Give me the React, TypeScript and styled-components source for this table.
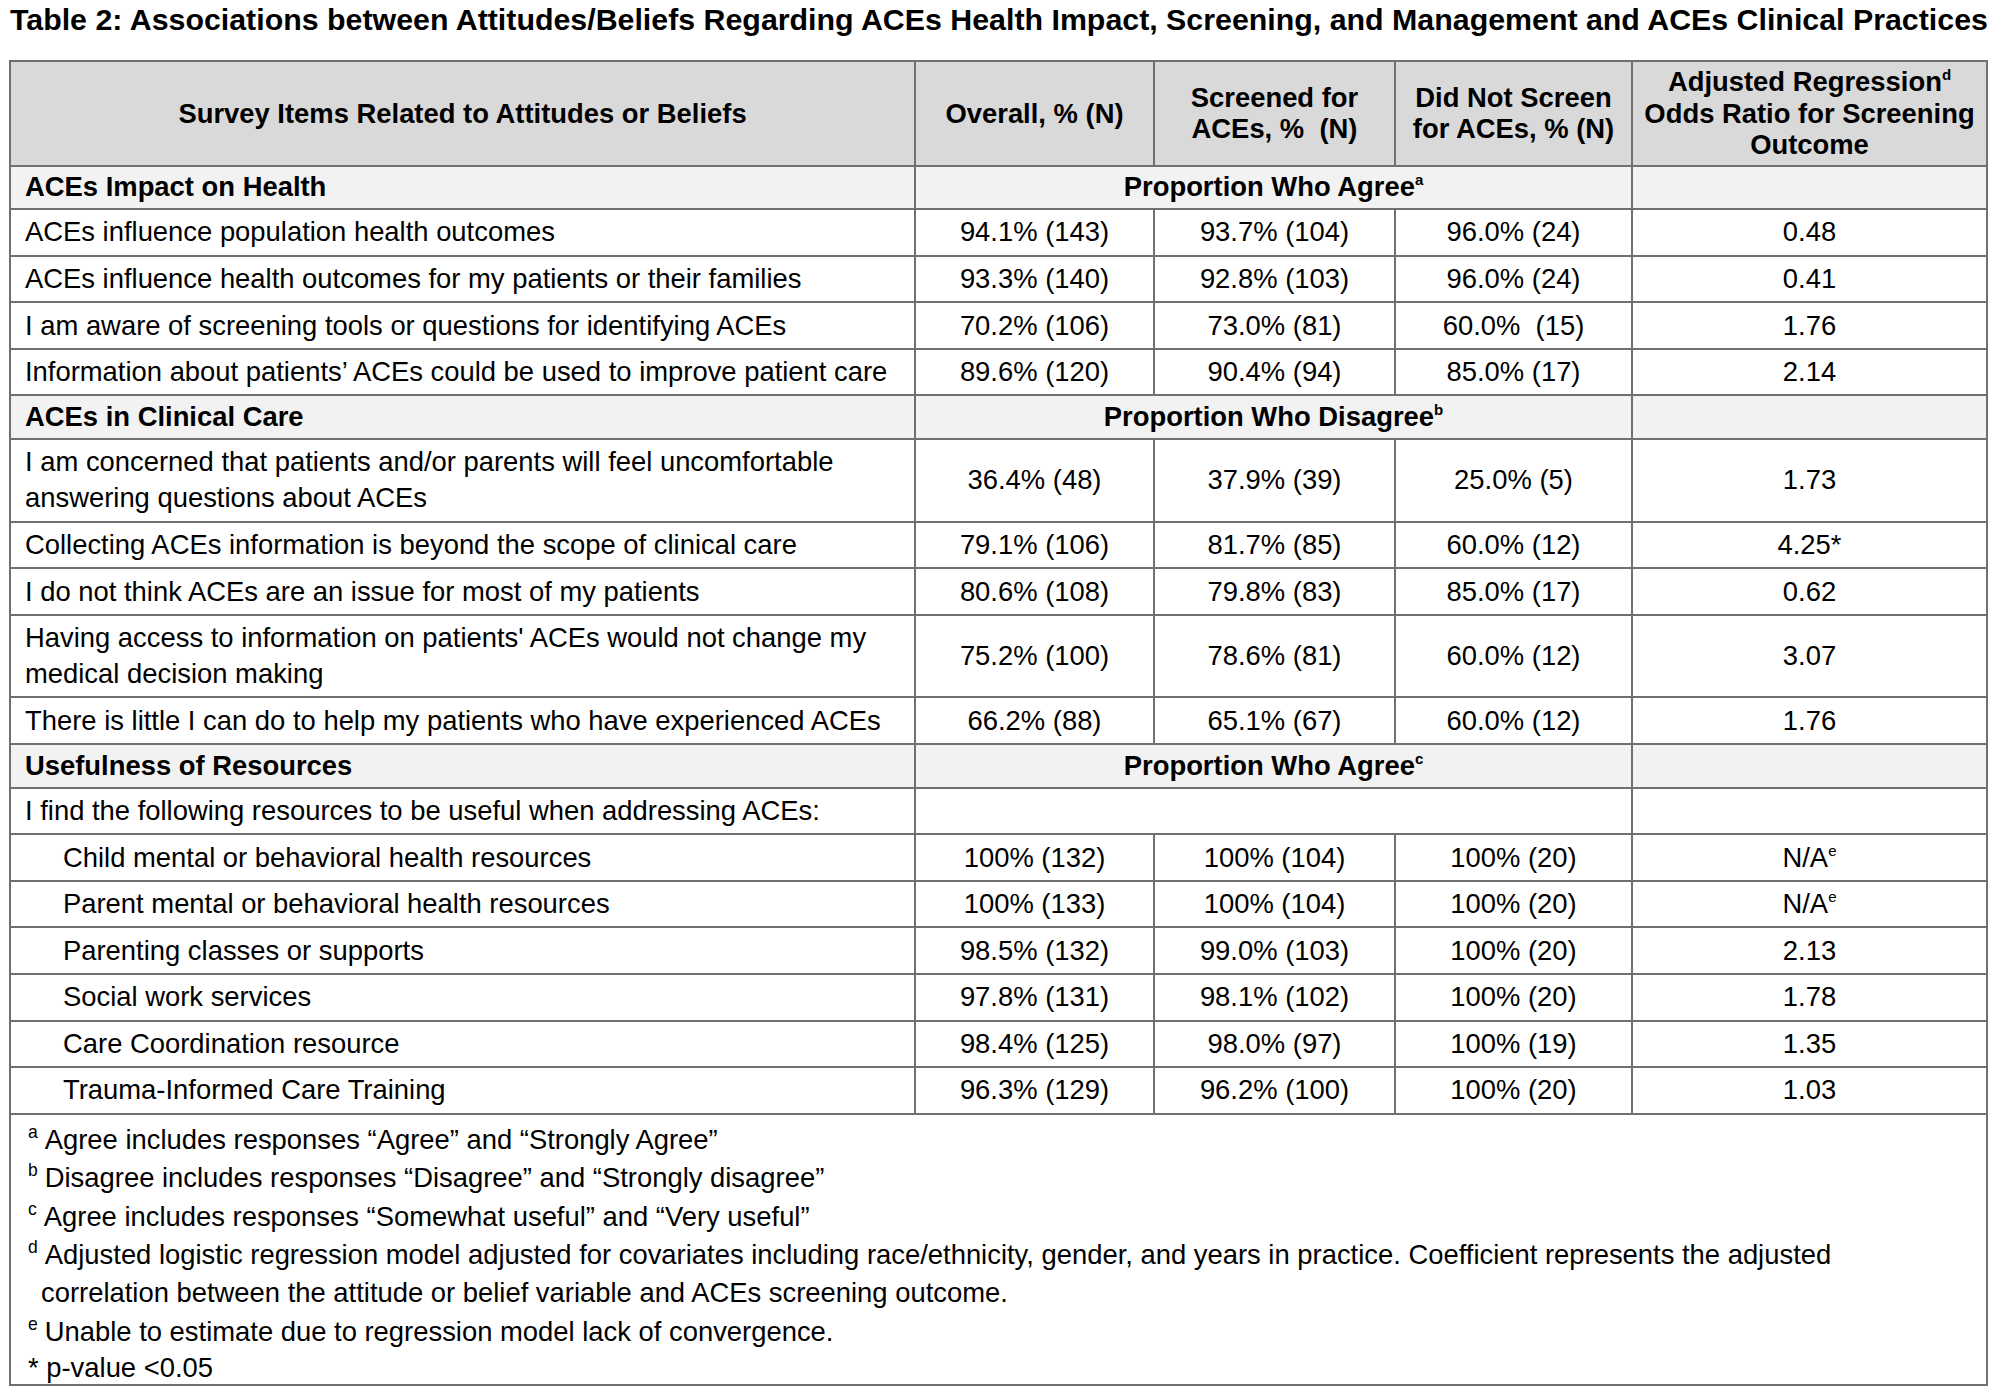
import React from 'react';
import styled, { createGlobalStyle } from 'styled-components';

const GlobalStyle = createGlobalStyle`
  html, body { margin: 0; padding: 0; background: #ffffff; }
  body {
    font-family: "Liberation Sans", Arial, Helvetica, sans-serif;
    color: #000000;
  }
`;

const Page = styled.div`
  padding: 3px 0 0 9px;
  width: 1977px;
`;

const Title = styled.h1`
  margin: 0 0 23px 1px;
  font-size: 30.35px;
  line-height: 34px;
  font-weight: 700;
  white-space: nowrap;
`;

const Table = styled.table`
  border-collapse: collapse;
  table-layout: fixed;
  width: 1977px;
  font-size: 27.4px;
`;

const HeadCell = styled.th`
  background: #d9d9d9;
  border: 2px solid #707070;
  font-weight: 700;
  text-align: center;
  vertical-align: middle;
  line-height: 31.5px;
  padding: 4px 6px;
`;

const SectionCell = styled.td<{ $center?: boolean }>`
  background: #f2f2f2;
  border: 2px solid #707070;
  font-weight: 700;
  text-align: ${(p) => (p.$center ? 'center' : 'left')};
  line-height: 36px;
  padding: 2.8px 14px;
  white-space: nowrap;
`;

const Cell = styled.td<{ $center?: boolean; $indent?: boolean }>`
  border: 2px solid #707070;
  text-align: ${(p) => (p.$center ? 'center' : 'left')};
  vertical-align: middle;
  line-height: 36px;
  padding: 4.3px 14px 4.3px ${(p) => (p.$indent ? '52px' : '14px')};
  white-space: nowrap;
`;

const Sup = styled.sup`
  font-size: 0.55em;
  line-height: 0;
  vertical-align: 0.72em;
`;

const NoteCell = styled.td`
  border: 2px solid #707070;
  padding: 6px 0 0 17px;
`;

const Note = styled.div<{ $short?: boolean; $cont?: boolean }>`
  line-height: ${(p) => (p.$short ? '33px' : '38.4px')};
  padding-left: ${(p) => (p.$cont ? '13px' : '0')};
  white-space: nowrap;
`;

const NoteMark = styled.sup`
  font-size: 0.64em;
  line-height: 0;
  vertical-align: 0.62em;
  margin-right: 7px;
`;

type Row = {
  label: string[];
  values: string[];
  ratio: string;
  ratioSup?: string;
  indent?: boolean;
};

type Section = {
  title: string;
  measure: string;
  mark: string;
  intro?: string;
  rows: Row[];
};

const sections: Section[] = [
  {
    title: 'ACEs Impact on Health',
    measure: 'Proportion Who Agree',
    mark: 'a',
    rows: [
      { label: ['ACEs influence population health outcomes'], values: ['94.1% (143)', '93.7% (104)', '96.0% (24)'], ratio: '0.48' },
      { label: ['ACEs influence health outcomes for my patients or their families'], values: ['93.3% (140)', '92.8% (103)', '96.0% (24)'], ratio: '0.41' },
      { label: ['I am aware of screening tools or questions for identifying ACEs'], values: ['70.2% (106)', '73.0% (81)', '60.0%\u00a0 (15)'], ratio: '1.76' },
      { label: ['Information about patients\u2019 ACEs could be used to improve patient care'], values: ['89.6% (120)', '90.4% (94)', '85.0% (17)'], ratio: '2.14' },
    ],
  },
  {
    title: 'ACEs in Clinical Care',
    measure: 'Proportion Who Disagree',
    mark: 'b',
    rows: [
      { label: ['I am concerned that patients and/or parents will feel uncomfortable', 'answering questions about ACEs'], values: ['36.4% (48)', '37.9% (39)', '25.0% (5)'], ratio: '1.73' },
      { label: ['Collecting ACEs information is beyond the scope of clinical care'], values: ['79.1% (106)', '81.7% (85)', '60.0% (12)'], ratio: '4.25*' },
      { label: ['I do not think ACEs are an issue for most of my patients'], values: ['80.6% (108)', '79.8% (83)', '85.0% (17)'], ratio: '0.62' },
      { label: ["Having access to information on patients' ACEs would not change my", 'medical decision making'], values: ['75.2% (100)', '78.6% (81)', '60.0% (12)'], ratio: '3.07' },
      { label: ['There is little I can do to help my patients who have experienced ACEs'], values: ['66.2% (88)', '65.1% (67)', '60.0% (12)'], ratio: '1.76' },
    ],
  },
  {
    title: 'Usefulness of Resources',
    measure: 'Proportion Who Agree',
    mark: 'c',
    intro: 'I find the following resources to be useful when addressing ACEs:',
    rows: [
      { label: ['Child mental or behavioral health resources'], values: ['100% (132)', '100% (104)', '100% (20)'], ratio: 'N/A', ratioSup: 'e', indent: true },
      { label: ['Parent mental or behavioral health resources'], values: ['100% (133)', '100% (104)', '100% (20)'], ratio: 'N/A', ratioSup: 'e', indent: true },
      { label: ['Parenting classes or supports'], values: ['98.5% (132)', '99.0% (103)', '100% (20)'], ratio: '2.13', indent: true },
      { label: ['Social work services'], values: ['97.8% (131)', '98.1% (102)', '100% (20)'], ratio: '1.78', indent: true },
      { label: ['Care Coordination resource'], values: ['98.4% (125)', '98.0% (97)', '100% (19)'], ratio: '1.35', indent: true },
      { label: ['Trauma-Informed Care Training'], values: ['96.3% (129)', '96.2% (100)', '100% (20)'], ratio: '1.03', indent: true },
    ],
  },
];

const Lines: React.FC<{ lines: string[] }> = ({ lines }) => (
  <>
    {lines.map((l, i) => (
      <React.Fragment key={i}>
        {i > 0 && <br />}
        {l}
      </React.Fragment>
    ))}
  </>
);

export default function App() {
  return (
    <>
      <GlobalStyle />
      <Page>
        <Title>
          Table 2: Associations between Attitudes/Beliefs Regarding ACEs Health Impact, Screening, and Management and ACEs Clinical Practices
        </Title>
        <Table>
          <colgroup>
            <col style={{ width: 905 }} />
            <col style={{ width: 239 }} />
            <col style={{ width: 241 }} />
            <col style={{ width: 237 }} />
            <col style={{ width: 355 }} />
          </colgroup>
          <thead>
            <tr>
              <HeadCell>Survey Items Related to Attitudes or Beliefs</HeadCell>
              <HeadCell>Overall, % (N)</HeadCell>
              <HeadCell>
                Screened for
                <br />
                ACEs, %&nbsp; (N)
              </HeadCell>
              <HeadCell>
                Did Not Screen
                <br />
                for ACEs, % (N)
              </HeadCell>
              <HeadCell>
                Adjusted Regression<Sup>d</Sup>
                <br />
                Odds Ratio for Screening
                <br />
                Outcome
              </HeadCell>
            </tr>
          </thead>
          <tbody>
            {sections.map((s) => (
              <React.Fragment key={s.title}>
                <tr>
                  <SectionCell>{s.title}</SectionCell>
                  <SectionCell $center colSpan={3}>
                    {s.measure}
                    <Sup>{s.mark}</Sup>
                  </SectionCell>
                  <SectionCell />
                </tr>
                {s.intro && (
                  <tr>
                    <Cell>{s.intro}</Cell>
                    <Cell colSpan={3} />
                    <Cell />
                  </tr>
                )}
                {s.rows.map((r) => (
                  <tr key={r.label.join(' ')}>
                    <Cell $indent={r.indent}>
                      <Lines lines={r.label} />
                    </Cell>
                    {r.values.map((v, i) => (
                      <Cell $center key={i}>
                        {v}
                      </Cell>
                    ))}
                    <Cell $center>
                      {r.ratio}
                      {r.ratioSup && <Sup>{r.ratioSup}</Sup>}
                    </Cell>
                  </tr>
                ))}
              </React.Fragment>
            ))}
            <tr>
              <NoteCell colSpan={5}>
                <Note>
                  <NoteMark>a</NoteMark>Agree includes responses “Agree” and “Strongly Agree”
                </Note>
                <Note>
                  <NoteMark>b</NoteMark>Disagree includes responses “Disagree” and “Strongly disagree”
                </Note>
                <Note>
                  <NoteMark>c</NoteMark>Agree includes responses “Somewhat useful” and “Very useful”
                </Note>
                <Note>
                  <NoteMark>d</NoteMark>Adjusted logistic regression model adjusted for covariates including race/ethnicity, gender, and years in practice. Coefficient represents the adjusted
                </Note>
                <Note $cont>correlation between the attitude or belief variable and ACEs screening outcome.</Note>
                <Note>
                  <NoteMark>e</NoteMark>Unable to estimate due to regression model lack of convergence.
                </Note>
                <Note $short>* p-value &lt;0.05</Note>
              </NoteCell>
            </tr>
          </tbody>
        </Table>
      </Page>
    </>
  );
}
